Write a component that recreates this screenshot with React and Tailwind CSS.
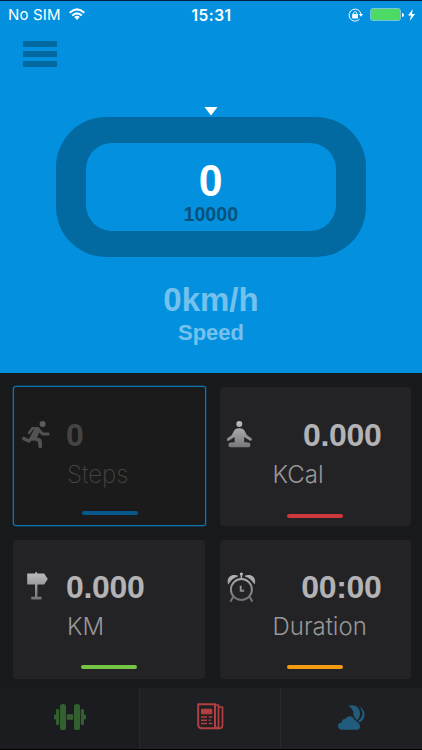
const num = "font-['Liberation_Sans',Arial,sans-serif] font-bold text-[32px] leading-[32px] whitespace-nowrap";

function Shade({ id }) {
  return (
    <defs>
      <linearGradient id={id} x1="0" y1="0" x2="0" y2="28" gradientUnits="userSpaceOnUse">
        <stop offset="0" stopColor="#bdbdbf" />
        <stop offset="1" stopColor="#737375" />
      </linearGradient>
    </defs>
  );
}

function Runner() {
  return (
    <svg width="28" height="28" viewBox="0 0 28 28" fill="none" stroke="#525253" strokeLinecap="round" strokeLinejoin="round">
      <circle cx="20.6" cy="3" r="3" fill="#5c5c5d" stroke="none" />
      <path d="M7 12L10.5 7.4L15.5 7.2" strokeWidth="2.6" />
      <path d="M16.5 8.5L20.6 13L26.3 13" strokeWidth="2.8" />
      <path d="M15.2 9.2L11.2 16.5" strokeWidth="6.2" />
      <path d="M10.5 16L7 20L1.8 17.6" strokeWidth="3.4" />
      <path d="M12 17L17.8 19.6L18.2 25.3" strokeWidth="3.8" />
    </svg>
  );
}

function Meditate() {
  return (
    <svg width="28" height="28" viewBox="0 0 28 28">
      <Shade id="med" />
      <g fill="url(#med)">
        <circle cx="12.3" cy="3" r="3" />
        <path d="M9.8 7.6Q12.3 6.7 14.8 7.6C17.5 8.4 18.6 12 19.8 14L24.4 17.2Q25.4 18.2 24.6 19.3Q23.7 20.3 22.5 19.5L17.2 15.9L17.2 21.2L21.5 21.6Q23.4 22 23.4 24.2Q23.4 26.3 21.4 26.3L3.4 26.3Q1.4 26.3 1.4 24.2Q1.4 22 3.3 21.6L7.6 21.2L7.6 15.9L2.2 19.6Q1 20.4 0.1 19.4Q-.6 18.2.4 17.2L4.9 14C6.1 12 7.1 8.4 9.8 7.6Z" />
      </g>
    </svg>
  );
}

function Signpost() {
  return (
    <svg width="28" height="28" viewBox="0 0 28 28">
      <Shade id="sign" />
      <path fill="url(#sign)" d="M8.3 1.4L8.3 .5Q9.2-.6 10.1.5L10.1 1.4L17.2 1.4L20.8 7L17.2 12.4L10.4 12.4L10.4 24.8L14.5 24.8L14.5 27.6L4.3 27.6L4.3 24.8L8 24.8L8 12.4L.2 12.4L.2 1.4Z" />
    </svg>
  );
}

function Alarm() {
  return (
    <svg width="30" height="31" viewBox="0 0 30 31">
      <Shade id="alarm" />
      <g fill="url(#alarm)">
        <path d="M1.2 12.6C-1.3 5.5 4.8 .8 11.6 3.9C6.9 5.6 3.8 8.3 1.2 12.6Z" />
        <path d="M27.6 12.6C30.1 5.5 24 .8 17.2 3.9C21.9 5.6 25 8.3 27.6 12.6Z" />
        <circle cx="14.4" cy="2" r="1.6" />
      </g>
      <g fill="none" stroke="url(#alarm)" strokeLinecap="round">
        <circle cx="14.4" cy="17.5" r="10.5" strokeWidth="1.9" />
        <path d="M14.3 3L14.4 7" strokeWidth="1.5" />
        <path d="M5.8 25.5L3.8 29M23 25.5L25 29" strokeWidth="2" />
        <path d="M13.7 13.8L13.7 18.7L17.2 18.7" strokeWidth="1.9" strokeLinecap="butt" />
      </g>
    </svg>
  );
}

function Card({ active, icon, value, label, bar, right, top }) {
  const frame = active
    ? "border-[#1274aa] bg-[#1b1b1b] text-[#444445] shadow-[0_0_0_0.5px_#0b5681]"
    : "border-[#232325] bg-[#232325] text-[#b3b3b5]";
  return (
    <div className={`rounded-[3px] border ${active ? "-mt-px -mr-px" : ""} ${frame}`}>
      <div className={`flex items-start ${active ? "pt-[32px]" : top ? "pt-[31px]" : "pt-[30px]"}`}>
        <div className={`h-[30px] shrink-0 ${active || top ? "pt-[2px]" : "pt-px"} ${right ? "w-[53px] pl-[6.5px]" : "w-[52px] pl-[8px]"}`}>{icon}</div>
        <div className={right ? "w-[108px] text-right" : "w-[109px]"}>
          <div className={`${num} tracking-[-0.3px]`}>{value}</div>
        </div>
      </div>
      <div className={`mt-[8px] font-['Inter','Liberation_Sans',sans-serif] text-[24px] leading-[32px] ${active ? "font-extralight" : "font-light"} ${right ? "pl-[52px]" : "pl-[53px]"} ${active ? "text-[#454444]" : "text-[#98989a]"}`}>{label}</div>
      <div className={`h-[4px] w-[56px] rounded-full ${bar}`} />
    </div>
  );
}

function Dumbbell() {
  return (
    <svg width="32" height="26" viewBox="0 0 32 26" fill="#345f2e">
      <rect x="6" width="6" height="26" rx="2.6" />
      <rect x="20" width="6" height="26" rx="2.6" />
      <rect x="2" y="5" width="3.2" height="16" rx="1.3" />
      <rect x="26.8" y="5" width="3.2" height="16" rx="1.3" />
      <rect y="10.5" width="2.5" height="5" rx="1" />
      <rect x="29.5" y="10.5" width="2.5" height="5" rx="1" />
      <rect x="12.8" y="10.2" width="6.4" height="5.6" />
    </svg>
  );
}

function News() {
  return (
    <svg width="27" height="27" viewBox="0 0 27 27" fill="none" stroke="#b53e41">
      <path d="M1.2 1.2H18V22Q18 25.3 20 25.3H5Q1.2 25.3 1.2 21.5Z" strokeWidth="2" strokeLinejoin="round" />
      <path d="M18 2H21.5V23Q21.5 25.3 19.5 25.3M21.5 4H25.5V22Q25.5 25.3 22.5 25.3H18" strokeWidth="1.7" strokeLinejoin="round" />
      <path d="M4.5 6.2H14.8V10.8H4.5Z" fill="#b53e41" strokeWidth="1" />
      <path d="M4 14H10M4 17.2H10M4 20.4H10M11.7 14H15.3M11.7 20.4H15.3" strokeWidth="1.5" />
      <path d="M11.7 17.2H13.6" strokeWidth="1.5" />
    </svg>
  );
}

function Weather() {
  return (
    <svg width="27" height="26" viewBox="0 0 27 26" fill="#225c7d">
      <path d="M4.5 24.8Q0 24.8 0 21Q0 17.6 3.9 17.2Q4.2 13.7 7.4 13.7Q8.4 11.2 11.5 11.2Q15.5 11.2 16.4 15Q19 15.2 19.4 17.5Q22 18.4 22 21.2Q22 24.8 18.3 24.8Z" />
      <path d="M10.3.7C17-1.3 22 2.5 22 8.4Q22 12.7 18.8 15.2L17.3 13.5Q15.8 10.5 15.4 10C16 6.3 13.7 2.7 10.3.7Z" />
      <path d="M21 1.1C28 4.7 28.5 14 21.5 17.4L20.3 15.8C25.7 12.3 25.4 6 21 1.1Z" />
    </svg>
  );
}

export default function App() {
  return (
    <div className="flex h-[750px] w-[422px] flex-col overflow-hidden bg-[#18191b] font-['Liberation_Sans',Arial,sans-serif]">
      <header className="h-[373px] border-t border-[#071c42] bg-[#0391df]">
        <div className="flex h-[27px] items-center pl-[8px] pr-[7px] text-white">
          <div className="flex flex-1 items-center gap-[8px] font-['Inter',sans-serif] text-[15px]">
            <span className="w-[53px] whitespace-nowrap pt-px tracking-[0.15px]">No SIM</span>
            <svg width="16" height="13" viewBox="0 0 16 13" fill="none" stroke="white" strokeWidth="2">
              <path d="M.7 4.7Q8-1.9 15.3 4.7M3.2 7.6Q8 3.1 12.8 7.6" />
              <path d="M5.2 9Q8 6.4 10.8 9L8 12Z" fill="white" stroke="none" />
            </svg>
          </div>
          <span className="pt-[2px] font-['Inter',sans-serif] text-[15.5px] font-semibold tracking-[.45px]">15:31</span>
          <div className="flex flex-1 items-center justify-end">
            <svg className="mr-[7px]" width="15" height="14" viewBox="0 0 15 14">
              <path d="M11.5 11.2A6 6 0 1 1 13 6" fill="none" stroke="white" />
              <path d="M10.8 6H15L13 8.8Z" fill="white" />
              <rect x="4.2" y="6" width="5.8" height="4.5" fill="white" />
              <path d="M5.3 6V5Q7.1 2 8.9 5V6" fill="none" stroke="white" />
            </svg>
            <div className="h-[13px] w-[31px] rounded-[3px] border border-[#75c5dc] bg-[#4cd964]" />
            <div className="ml-px h-[4px] w-[2px] rounded-r bg-white" />
            <svg className="ml-[4px]" width="7" height="12" viewBox="0 0 7 12" fill="white"><path d="M4.8 0L0 6.5H3L1.8 12L7 5H4Z" /></svg>
          </div>
        </div>
        <div className="ml-[23px] mt-[13px] flex w-[34px] flex-col gap-[4px]">
          <i className="h-[6px] rounded-[1px] bg-[#0269a1]" /><i className="h-[6px] rounded-[1px] bg-[#0269a1]" /><i className="h-[6px] rounded-[1px] bg-[#0269a1]" />
        </div>
        <svg className="mx-auto mt-[40px]" width="14" height="9" viewBox="0 0 14 9"><path d="M.5 0H13.5L7 8.5Z" fill="white" /></svg>
        <div className="mx-auto mt-px h-[140px] w-[310px] rounded-[50px] bg-[#0269a1] px-[30px] py-[26px]">
          <div className="flex h-[88px] flex-col items-center rounded-[26px] bg-[#0391df] pt-[15px]">
            <span className="scale-x-95 text-[45px] font-bold leading-[46px] text-white">0</span>
            <span className="scale-x-[0.98] text-[20px] font-bold leading-[20px] text-[#08527b]">10000</span>
          </div>
        </div>
        <div className="mt-[25px] text-center text-[33px] font-bold leading-[36px] text-[#74c1ee]">0km/h</div>
        <div className="mt-px text-center text-[22px] font-bold leading-[28px] text-[#74c1ee]">Speed</div>
      </header>
      <main className="grid h-[315px] grid-cols-[192px_191.5px] grid-rows-[139px_139px] gap-x-[14.5px] gap-y-[14px] pl-[13px] pt-[14px]">
        <Card active icon={<Runner />} value="0" label="Steps" bar="ml-[68px] mt-[20px] bg-[#07598d]" />
        <Card right top icon={<Meditate />} value="0.000" label="KCal" bar="ml-[66px] mt-[23px] bg-[#cf383c]" />
        <Card icon={<div className="pl-[5px]"><Signpost /></div>} value="0.000" label="KM" bar="ml-[66.5px] mt-[22px] bg-[#75c644]" />
        <Card right icon={<Alarm />} value="00:00" label="Duration" bar="ml-[66px] mt-[22px] bg-[#f39c12]" />
      </main>
      <nav className="grid h-[62px] grid-cols-[140px_141px_141px] border-b border-black bg-[#1f2023]">
        <div className="flex items-start justify-center border-r border-[#28292d] bg-[#1b1c20] pt-[16px]"><Dumbbell /></div>
        <div className="flex items-start justify-center border-r border-[#28292d] pt-[15px]"><News /></div>
        <div className="flex items-start justify-center pt-[17px]"><Weather /></div>
      </nav>
    </div>
  );
}
